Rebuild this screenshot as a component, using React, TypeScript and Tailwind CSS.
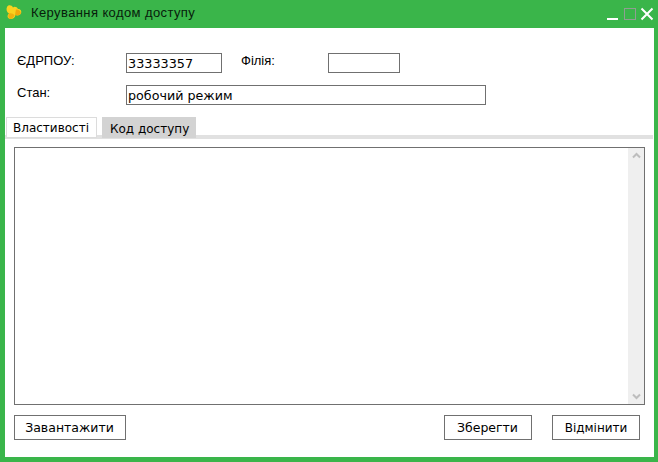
export default function App() {
  return (
    <div className="w-[658px] h-[462px] bg-[#3ab54a] flex flex-col text-black overflow-hidden font-['DejaVu_Sans',sans-serif]">
      <div className="h-[28px] shrink-0 flex items-start pl-[5px]">
        <svg width="18" height="18" viewBox="0 0 18 18" className="shrink-0 mt-[4px]">
          <path d="M2 3 C3 0.5 7 1 8 3.5 C9.5 2 12 3 13 5 C15.5 5 17 7 16 9.5 C15 11.5 12 12 10.5 11 C10 14 7.5 15.5 5 15 C2 14 2 11.5 4 9.5 C1.5 8 1 5 2 3 Z" fill="#f8d21f" />
          <path d="M11 5.5 C13.5 5 16 7 15.8 9.5 C14.5 11.5 12 12 10 10.8 Z" fill="#efa90d" />
          <path d="M4 9.5 C6 9 8.5 9.5 9.5 11.5 C8.5 14 6.5 15 5 15 C3 14 2.8 11.5 4 9.5 Z" fill="#eeb10f" />
        </svg>
        <span className="ml-[8px] mt-[6px] text-[13px] leading-[14px] text-[#07200b] font-['Liberation_Sans',sans-serif] tracking-[0.4px]">Керування кодом доступу</span>
        <svg width="56" height="24" viewBox="0 0 56 24" className="ml-auto shrink-0">
          <rect x="5" y="18" width="11" height="2" fill="#fff" />
          <rect x="22.5" y="8.5" width="11" height="11" fill="none" stroke="#8f9e92" />
          <path d="M39.5 8.5 L50.5 19.5 M50.5 8.5 L39.5 19.5" stroke="#fff" strokeWidth="2" fill="none" />
        </svg>
      </div>
      <div className="w-[649px] h-[429px] ml-[5px] bg-white flex flex-col">
        <div className="pl-[12px] pt-[25px] flex items-start">
          <span className="w-[109px] text-[13px] leading-[14px] font-['Liberation_Sans',sans-serif] mt-[1px]">ЄДРПОУ:</span>
          <div className="w-[96px] h-[20px] border border-[#707070] text-[12.8px] leading-[20px] pl-[1px]">33333357</div>
          <span className="ml-[19px] w-[87px] text-[13px] leading-[14px] font-['Liberation_Sans',sans-serif] mt-[1px]">Філія:</span>
          <div className="w-[72px] h-[20px] border border-[#707070]"></div>
        </div>
        <div className="pl-[12px] pt-[12px] flex items-start">
          <span className="w-[109px] text-[13px] leading-[14px] font-['Liberation_Sans',sans-serif] mt-[1px]">Стан:</span>
          <div className="w-[360px] h-[20px] border border-[#707070] text-[12.7px] leading-[19px] pl-[1px]">робочий режим</div>
        </div>
        <div className="flex items-start pl-[1px] mt-[12px] h-[18px] relative z-10">
          <div className="w-[91px] h-[21px] bg-white border border-[#dcdcdc] text-[12px] leading-[21px] pl-[6px]">Властивості</div>
          <div className="ml-[5px] w-[94px] h-[21px] bg-[#d3d3d3] text-[12px] leading-[25px] pl-[8px]">Код доступу</div>
        </div>
        <div className="h-[4px] w-[648px] bg-[#e1e1e1]"></div>
        <div className="ml-[9px] mt-[8px] w-[631px] h-[258px] border border-[#707070] flex justify-end">
          <div className="w-[16px] h-full bg-[#efefef] flex flex-col justify-between items-center py-[4px]">
            <svg width="9" height="7" viewBox="0 0 9 7"><path d="M1 5.5 L4.5 2 L8 5.5" stroke="#bdbdbd" strokeWidth="2" fill="none" /></svg>
            <svg width="9" height="7" viewBox="0 0 9 7"><path d="M1 1.5 L4.5 5 L8 1.5" stroke="#bdbdbd" strokeWidth="2" fill="none" /></svg>
          </div>
        </div>
        <div className="ml-[9px] mt-[10px] w-[626px] flex">
          <div className="w-[112px] h-[25px] border border-[#707070] flex items-center justify-center pt-[1px] pr-[1px] text-[12.5px]">Завантажити</div>
          <div className="ml-auto w-[88px] h-[25px] border border-[#707070] flex items-center justify-center pt-[1px] pr-[1px] text-[12.5px]">Зберегти</div>
          <div className="ml-[20px] w-[88px] h-[25px] border border-[#707070] flex items-center justify-center pt-[1px] text-[12px]">Відмінити</div>
        </div>
      </div>
    </div>
  );
}
